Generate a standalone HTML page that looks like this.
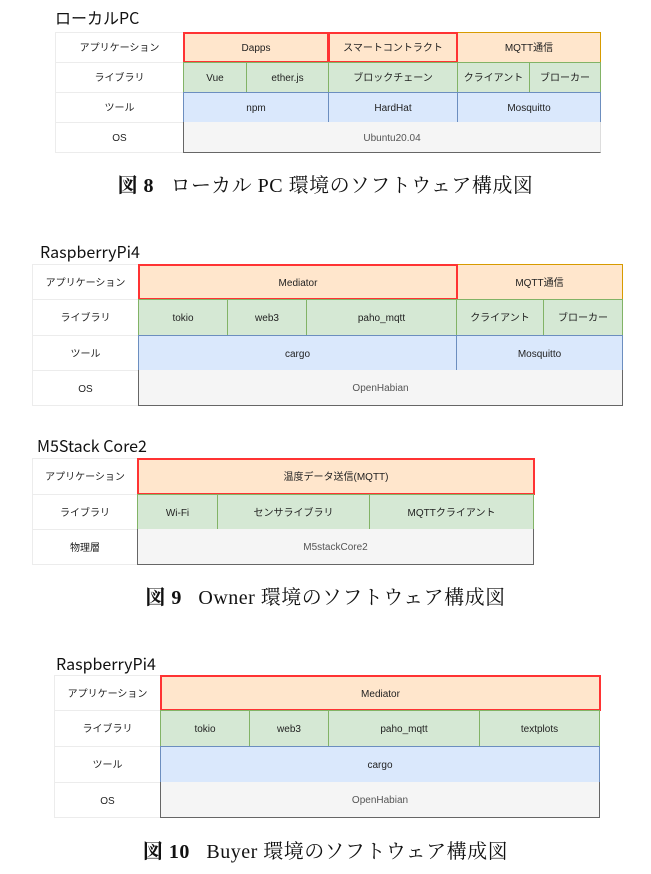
<!DOCTYPE html>
<html><head><meta charset="utf-8"><style>
body{margin:0;width:651px;height:874px;background:#fff;position:relative;overflow:hidden;font-family:"Liberation Sans","Noto Sans CJK JP",sans-serif}
.c{position:absolute;box-sizing:border-box;display:flex;align-items:center;justify-content:center;font-size:10px;color:#222;white-space:nowrap;line-height:1;padding-top:3px}
.l{border:1px solid #ececec;background:#fff}
.o{background:#ffe6cc;border:1px solid #d79b00}
.g{background:#d5e8d4;border:1px solid #82b366}
.b{background:#dae8fc;border:1px solid #6c8ebf}
.s{background:#f5f5f5;border:1px solid #666;color:#555}
.r{border:2px solid #ff3333}
.t{position:absolute;font-size:16px;color:#111;font-family:"Noto Sans CJK JP","Liberation Sans",sans-serif;line-height:1}
.cap{position:absolute;left:0;width:651px;text-align:center;font-family:"Liberation Serif","Noto Serif CJK SC",serif;font-size:20px;color:#111;line-height:1;letter-spacing:0.5px}
.cap b{font-weight:bold}
</style></head><body>

<div class="t" style="left:55px;top:9px">ローカルPC</div>
<div class="c l" style="left:55px;top:32px;width:129px;height:31px">アプリケーション</div>
<div class="c l" style="left:55px;top:62px;width:129px;height:31px">ライブラリ</div>
<div class="c l" style="left:55px;top:92px;width:129px;height:31px">ツール</div>
<div class="c l" style="left:55px;top:122px;width:129px;height:31px">OS</div>
<div class="c o" style="left:457px;top:32px;width:144px;height:31px">MQTT通信</div>
<div class="c o r" style="left:183px;top:32px;width:146px;height:31px">Dapps</div>
<div class="c o r" style="left:328px;top:32px;width:130px;height:31px">スマートコントラクト</div>
<div class="c g" style="left:183px;top:62px;width:64px;height:31px">Vue</div>
<div class="c g" style="left:246px;top:62px;width:83px;height:31px">ether.js</div>
<div class="c g" style="left:328px;top:62px;width:130px;height:31px">ブロックチェーン</div>
<div class="c g" style="left:457px;top:62px;width:73px;height:31px">クライアント</div>
<div class="c g" style="left:529px;top:62px;width:72px;height:31px">ブローカー</div>
<div class="c b" style="left:183px;top:92px;width:146px;height:31px">npm</div>
<div class="c b" style="left:328px;top:92px;width:130px;height:31px">HardHat</div>
<div class="c b" style="left:457px;top:92px;width:144px;height:31px">Mosquitto</div>
<div class="c s" style="left:183px;top:122px;width:418px;height:31px;border-top:none;border-right:1px solid #ddd">Ubuntu20.04</div>
<div class="cap" style="top:176px"><b>図 8</b>&nbsp;&nbsp;&nbsp;ローカル PC 環境のソフトウェア構成図</div>

<div class="t" style="left:40px;top:243px">RaspberryPi4</div>
<div class="c l" style="left:32px;top:264px;width:107px;height:36px">アプリケーション</div>
<div class="c l" style="left:32px;top:299px;width:107px;height:37px">ライブラリ</div>
<div class="c l" style="left:32px;top:335px;width:107px;height:36px">ツール</div>
<div class="c l" style="left:32px;top:370px;width:107px;height:36px">OS</div>
<div class="c o" style="left:456px;top:264px;width:167px;height:36px">MQTT通信</div>
<div class="c o r" style="left:138px;top:264px;width:320px;height:36px">Mediator</div>
<div class="c g" style="left:138px;top:299px;width:90px;height:37px">tokio</div>
<div class="c g" style="left:227px;top:299px;width:80px;height:37px">web3</div>
<div class="c g" style="left:306px;top:299px;width:151px;height:37px">paho_mqtt</div>
<div class="c g" style="left:456px;top:299px;width:88px;height:37px">クライアント</div>
<div class="c g" style="left:543px;top:299px;width:80px;height:37px">ブローカー</div>
<div class="c b" style="left:138px;top:335px;width:319px;height:36px">cargo</div>
<div class="c b" style="left:456px;top:335px;width:167px;height:36px">Mosquitto</div>
<div class="c s" style="left:138px;top:370px;width:485px;height:36px;border-top:none">OpenHabian</div>

<div class="t" style="left:37px;top:437px">M5Stack Core2</div>
<div class="c l" style="left:32px;top:458px;width:106px;height:37px">アプリケーション</div>
<div class="c l" style="left:32px;top:494px;width:106px;height:36px">ライブラリ</div>
<div class="c l" style="left:32px;top:529px;width:106px;height:36px">物理層</div>
<div class="c o r" style="left:137px;top:458px;width:398px;height:37px">温度データ送信(MQTT)</div>
<div class="c g" style="left:137px;top:494px;width:81px;height:36px">Wi-Fi</div>
<div class="c g" style="left:217px;top:494px;width:153px;height:36px">センサライブラリ</div>
<div class="c g" style="left:369px;top:494px;width:165px;height:36px">MQTTクライアント</div>
<div class="c s" style="left:137px;top:529px;width:397px;height:36px;border-top:none">M5stackCore2</div>
<div class="cap" style="top:588px"><b>図 9</b>&nbsp;&nbsp;&nbsp;Owner 環境のソフトウェア構成図</div>

<div class="t" style="left:56px;top:655px">RaspberryPi4</div>
<div class="c l" style="left:54px;top:675px;width:107px;height:36px">アプリケーション</div>
<div class="c l" style="left:54px;top:710px;width:107px;height:37px">ライブラリ</div>
<div class="c l" style="left:54px;top:746px;width:107px;height:37px">ツール</div>
<div class="c l" style="left:54px;top:782px;width:107px;height:36px">OS</div>
<div class="c o r" style="left:160px;top:675px;width:441px;height:36px">Mediator</div>
<div class="c g" style="left:160px;top:710px;width:90px;height:37px">tokio</div>
<div class="c g" style="left:249px;top:710px;width:80px;height:37px">web3</div>
<div class="c g" style="left:328px;top:710px;width:152px;height:37px">paho_mqtt</div>
<div class="c g" style="left:479px;top:710px;width:121px;height:37px">textplots</div>
<div class="c b" style="left:160px;top:746px;width:440px;height:37px">cargo</div>
<div class="c s" style="left:160px;top:782px;width:440px;height:36px;border-top:none">OpenHabian</div>
<div class="cap" style="top:842px"><b>図 10</b>&nbsp;&nbsp;&nbsp;Buyer 環境のソフトウェア構成図</div>

</body></html>
